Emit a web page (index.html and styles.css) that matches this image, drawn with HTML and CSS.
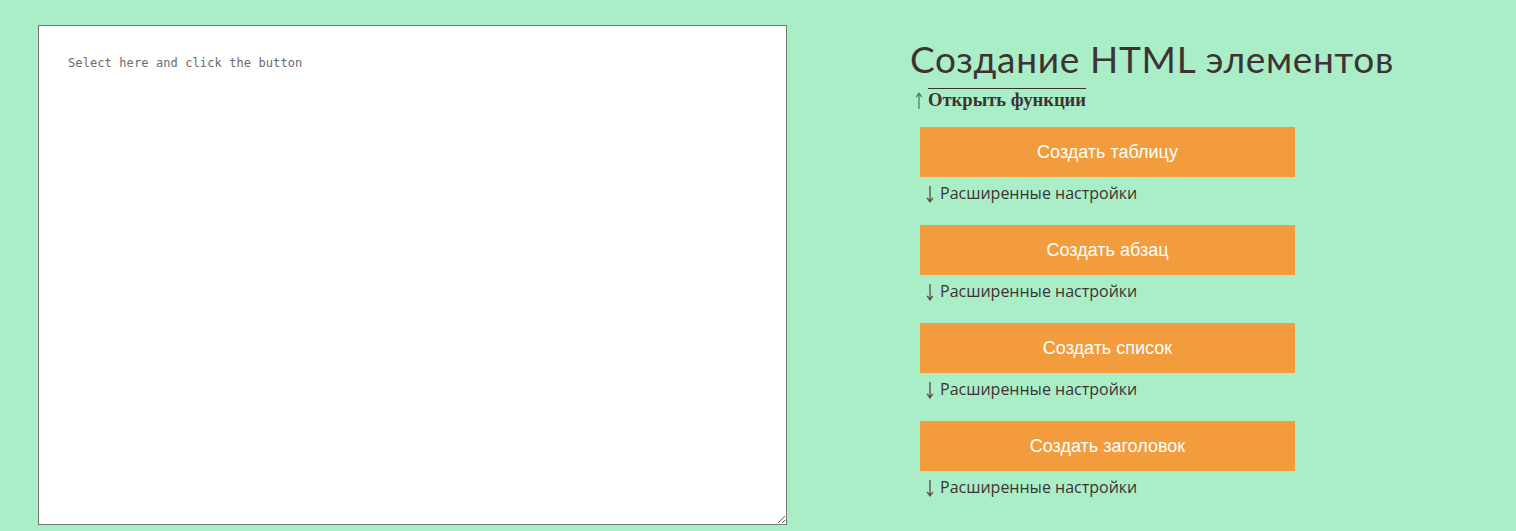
FILE: index.html
```html
<!DOCTYPE html>
<html lang="ru">
<head>
<meta charset="utf-8">
<title>Создание HTML элементов</title>
<link rel="stylesheet" href="styles.css">
</head>
<body>
<div class="page">
  <textarea class="editor">Select here and click the button</textarea>
  <div class="panel">
    <h1 class="title">Создание HTML элементов</h1>
    <div class="toggle"><svg class="arrow arrow-up" viewBox="0 0 8 17" width="8" height="17"><path d="M4 1.2V17M1.2 5.2L4 1.2L6.8 5.2"/></svg><span class="toggle-text">Открыть функции</span></div>
    <div class="items">
      <div class="item">
        <button class="btn">Создать таблицу</button>
        <div class="adv"><svg class="arrow arrow-down" viewBox="0 0 8 17" width="8" height="17"><path d="M4 0V15.8M1.2 11.8L4 15.8L6.8 11.8"/></svg>Расширенные настройки</div>
      </div>
      <div class="item">
        <button class="btn">Создать абзац</button>
        <div class="adv"><svg class="arrow arrow-down" viewBox="0 0 8 17" width="8" height="17"><path d="M4 0V15.8M1.2 11.8L4 15.8L6.8 11.8"/></svg>Расширенные настройки</div>
      </div>
      <div class="item">
        <button class="btn">Создать список</button>
        <div class="adv"><svg class="arrow arrow-down" viewBox="0 0 8 17" width="8" height="17"><path d="M4 0V15.8M1.2 11.8L4 15.8L6.8 11.8"/></svg>Расширенные настройки</div>
      </div>
      <div class="item">
        <button class="btn">Создать заголовок</button>
        <div class="adv"><svg class="arrow arrow-down" viewBox="0 0 8 17" width="8" height="17"><path d="M4 0V15.8M1.2 11.8L4 15.8L6.8 11.8"/></svg>Расширенные настройки</div>
      </div>
    </div>
  </div>
</div>
</body>
</html>
```
FILE: styles.css
```css
html, body {
  margin: 0;
  padding: 0;
  background: #aaeec8;
  height: 100%;
  overflow: hidden;
}
.page {
  display: flex;
  align-items: flex-start;
  padding: 25px 0 0 38px;
}
.editor {
  box-sizing: border-box;
  width: 749px;
  height: 500px;
  margin: 0;
  padding: 29px 29px;
  border: 1px solid #767676;
  background: #fff;
  font-family: "DejaVu Sans Mono", monospace;
  font-size: 12px;
  letter-spacing: 0.1px;
  line-height: 16px;
  color: #6b6b6b;
  resize: both;
  flex: none;
}
.panel {
  margin-left: 123px;
  display: flex;
  flex-direction: column;
}
.title {
  margin: 12px 0 0 0;
  font-family: "Lato", sans-serif;
  font-weight: 400;
  font-size: 37px;
  line-height: 44px;
  color: #3d3333;
  letter-spacing: 0.7px;
}
.toggle {
  margin-top: 7px;
  margin-left: 5px;
  display: flex;
  align-items: flex-end;
  font-family: "Liberation Serif", serif;
  font-size: 18.6px;
  line-height: 22px;
}
.arrow {
  fill: none;
  stroke-width: 1.3;
  flex: none;
}
.arrow-up {
  stroke: #557a6c;
  margin: 0 5px 2px 0;
}
.toggle-text {
  font-weight: 700;
  color: #3d3333;
  border-top: 1px solid #3d3333;
}
.items {
  margin-top: 16px;
  margin-left: 10px;
  display: flex;
  flex-direction: column;
}
.item {
  display: flex;
  flex-direction: column;
  align-items: flex-start;
}
.btn {
  width: 375px;
  height: 50px;
  border: 0;
  margin: 0;
  padding: 0;
  background: #f29c3d;
  color: #fff;
  font-family: "Liberation Sans", Arial, sans-serif;
  font-size: 18px;
}
.adv {
  margin: 5px 0 21px 6px;
  display: flex;
  align-items: center;
  font-family: "Open Sans", sans-serif;
  font-size: 16px;
  line-height: 22px;
  color: #3d3333;
}
.arrow-down {
  stroke: #5a4848;
  margin: 2px 6px 0 0;
}
```
